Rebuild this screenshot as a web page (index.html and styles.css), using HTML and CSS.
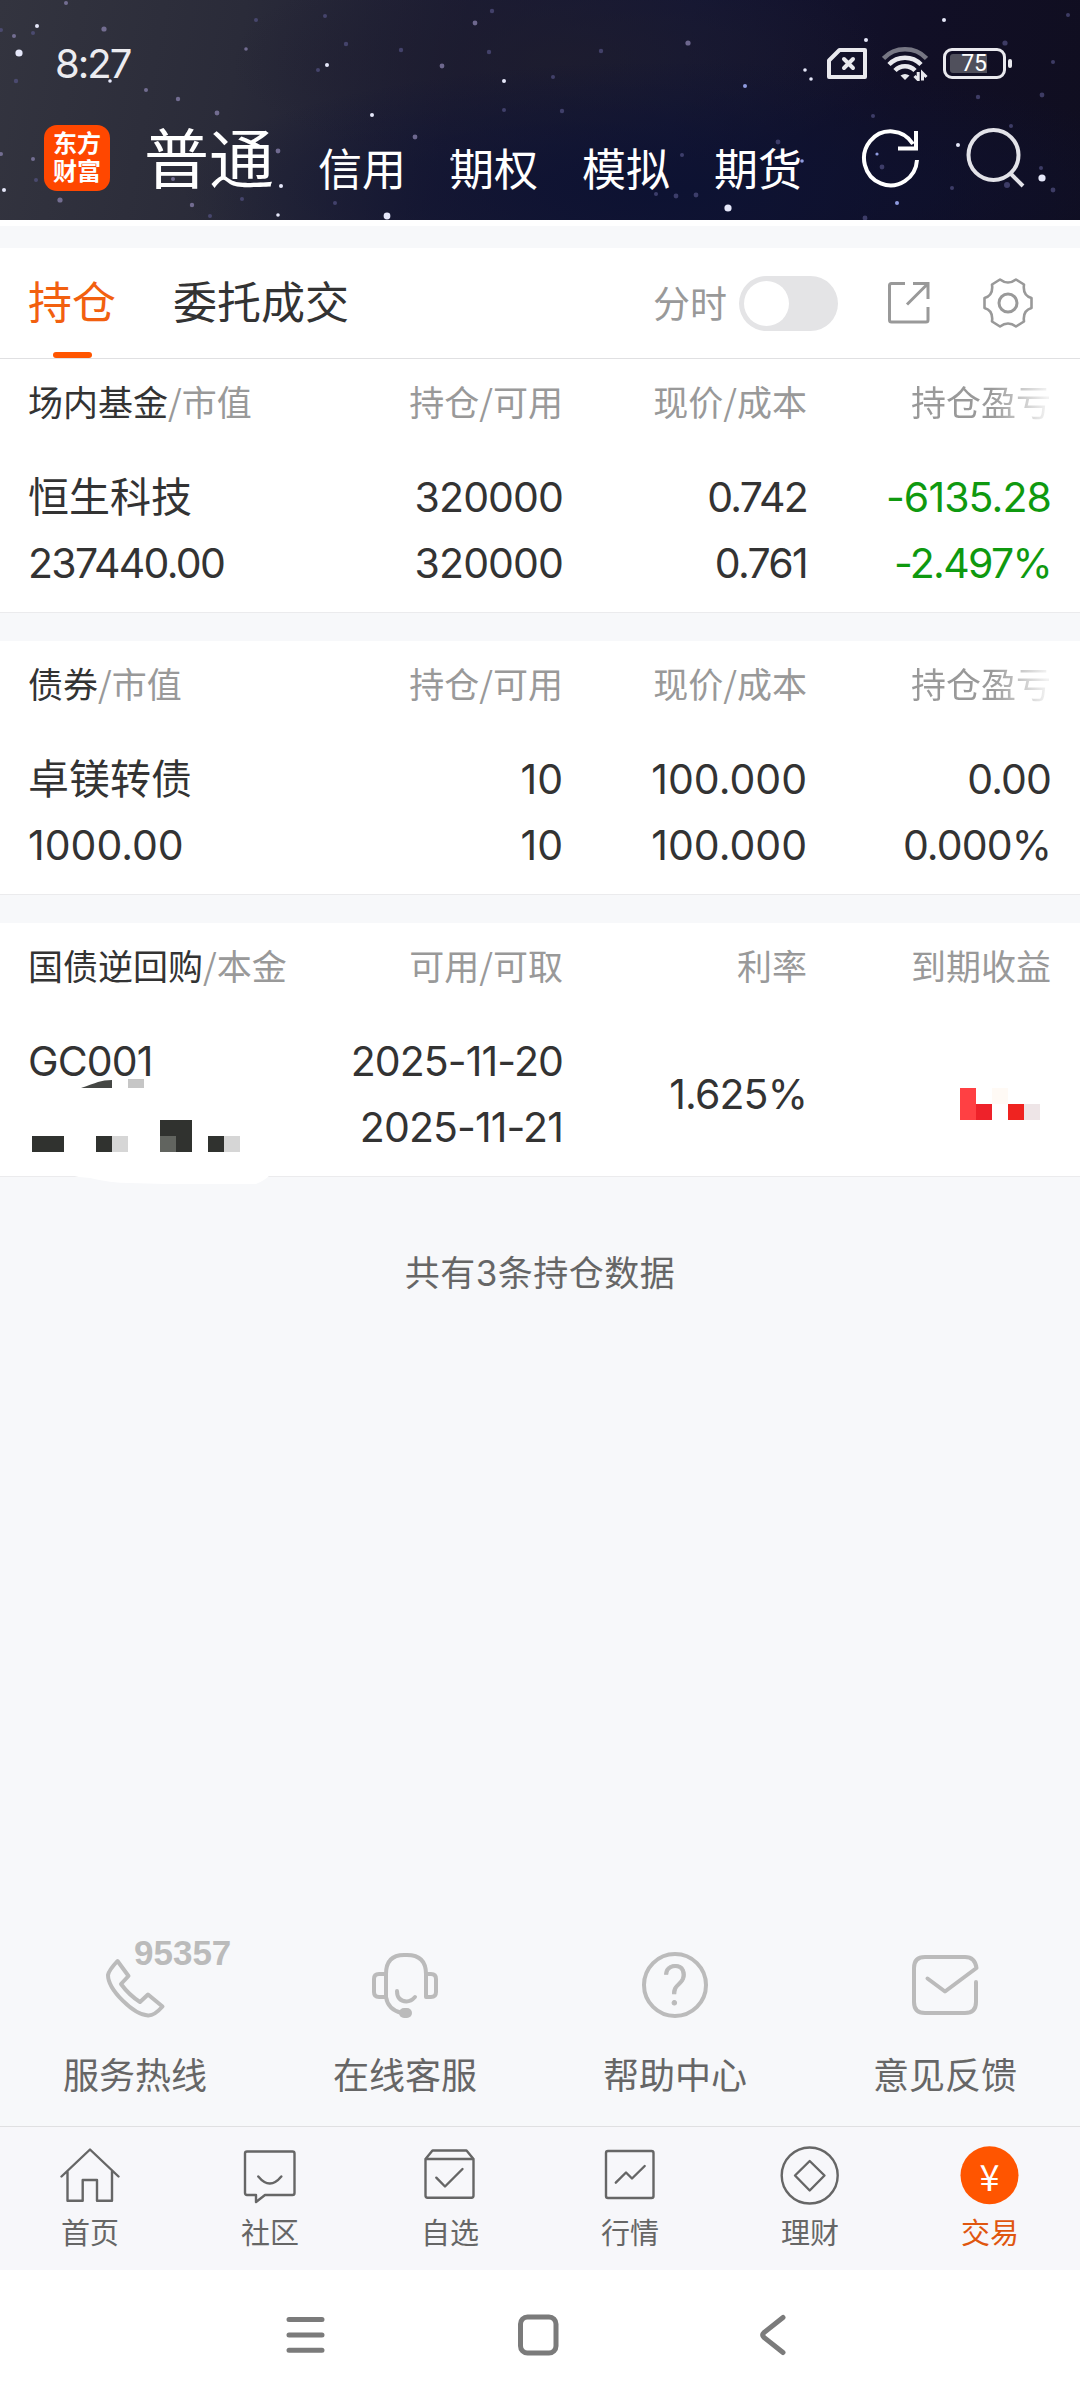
FILE: index.html
```html
<!DOCTYPE html>
<html lang="zh-CN">
<head>
<meta charset="UTF-8">
<meta name="viewport" content="width=device-width, initial-scale=1.0">
<title>持仓</title>
<link rel="stylesheet" href="styles.css">
</head>
<body>
<header class="header">
  <!-- Starry sky -->
  <svg class="sky" viewBox="0 0 1080 220">
    <g fill="#e6e8fa">
      <circle cx="19" cy="53" r="3.6"/><circle cx="37" cy="26" r="2"/><circle cx="110" cy="81" r="1.8"/>
      <circle cx="327" cy="65" r="2"/><circle cx="372" cy="115" r="2"/><circle cx="504" cy="81" r="2"/>
      <circle cx="452" cy="159" r="1.8"/><circle cx="281" cy="186" r="2"/><circle cx="278" cy="215" r="1.8"/>
      <circle cx="387" cy="216" r="3.4"/><circle cx="4" cy="190" r="2"/><circle cx="728" cy="208" r="3.6"/>
      <circle cx="805" cy="70" r="1.8"/><circle cx="811" cy="79" r="1.8"/><circle cx="866" cy="40" r="2"/>
      <circle cx="944" cy="20" r="2"/><circle cx="958" cy="145" r="2"/><circle cx="1042" cy="178" r="3.6"/>
    </g>
    <g fill="#8f9be0">
      <circle cx="897" cy="203" r="2"/><circle cx="802" cy="161" r="1.8"/><circle cx="877" cy="154" r="1.6"/>
      <circle cx="745" cy="86" r="2"/>
    </g>
    <g fill="#8a82ae" opacity="0.75">
      <circle cx="66" cy="3" r="2"/><circle cx="104" cy="29" r="2.6"/><circle cx="14" cy="36" r="2"/>
      <circle cx="178" cy="99" r="2.2"/><circle cx="217" cy="113" r="2.4"/><circle cx="146" cy="90" r="2"/>
      <circle cx="246" cy="49" r="1.8"/><circle cx="442" cy="66" r="2.4"/><circle cx="475" cy="23" r="2.4"/>
      <circle cx="278" cy="151" r="2.4"/><circle cx="60" cy="200" r="2.6"/><circle cx="192" cy="205" r="2.2"/>
      <circle cx="415" cy="137" r="2.4"/><circle cx="688" cy="43" r="2.6"/><circle cx="33" cy="159" r="2"/>
      <circle cx="1" cy="154" r="2"/><circle cx="173" cy="179" r="2"/>
    </g>
    <g fill="#5c5a90" opacity="0.6">
      <circle cx="33" cy="33" r="2"/><circle cx="1" cy="30" r="2"/><circle cx="16" cy="81" r="2.2"/>
      <circle cx="256" cy="20" r="2"/><circle cx="325" cy="16" r="2"/><circle cx="346" cy="44" r="2.2"/>
      <circle cx="401" cy="50" r="2.2"/><circle cx="492" cy="11" r="2.2"/><circle cx="489" cy="52" r="2.2"/>
      <circle cx="36" cy="180" r="2"/><circle cx="242" cy="199" r="2"/><circle cx="335" cy="203" r="2"/>
      <circle cx="210" cy="216" r="2"/><circle cx="318" cy="70" r="2"/><circle cx="601" cy="51" r="2.2"/>
      <circle cx="562" cy="111" r="2.2"/><circle cx="778" cy="142" r="2.4"/><circle cx="696" cy="195" r="2.4"/>
      <circle cx="676" cy="196" r="2.4"/><circle cx="656" cy="194" r="2"/><circle cx="682" cy="155" r="2"/>
      <circle cx="1005" cy="43" r="2.6"/><circle cx="978" cy="97" r="2.2"/><circle cx="1042" cy="95" r="2.4"/>
      <circle cx="873" cy="116" r="2"/><circle cx="1053" cy="62" r="2"/><circle cx="1007" cy="185" r="3"/>
      <circle cx="1053" cy="190" r="2.4"/><circle cx="952" cy="188" r="2"/><circle cx="1068" cy="15" r="2"/>
      <circle cx="865" cy="218" r="2.4"/><circle cx="882" cy="167" r="2.4"/><circle cx="1041" cy="168" r="2"/>
      <circle cx="553" cy="77" r="2"/><circle cx="504" cy="110" r="2"/><circle cx="1011" cy="126" r="2"/>
    </g>
  </svg>

  <div class="status-bar">
    <span class="clock">8:27</span>
    <div class="status-icons">
      <svg width="40" height="31" viewBox="0 0 40 31" fill="none" stroke="#e9e9ee" stroke-width="4" stroke-linejoin="round" stroke-linecap="round">
        <path d="M12.500 2H38V29H2V12.500Z"/>
        <path d="M17 11L26 20M26 11L17 20"/>
      </svg>
      <svg width="46" height="35" viewBox="0 0 46 35" fill="none" stroke="#e9e9ee" stroke-width="4.500">
        <path d="M1.500 12.500Q10 3.300 23 3.300T44.500 12.500" stroke="#777784"/>
        <path d="M7 18.500Q13.500 11.800 23 11.800T39 18.500"/>
        <path d="M13 24.500Q17 20.200 23 20.200T33 24.500"/>
        <path d="M18.500 29.500Q23 26.500 27.500 29.500L23 34Z" fill="#e9e9ee" stroke="none"/>
        <path d="M36.200 26V33.800L32.500 30M40.500 34.500V27L44.500 31" stroke-width="3"/>
      </svg>
      <div class="battery"><span class="battery-level">75</span></div>
    </div>
  </div>

  <div class="account-bar">
    <div class="logo"><span>东方</span><span>财富</span></div>
    <nav class="account-tabs">
      <span class="account-tab active">普通</span>
      <span class="account-tab">信用</span>
      <span class="account-tab">期权</span>
      <span class="account-tab">模拟</span>
      <span class="account-tab">期货</span>
    </nav>
    <div class="header-actions">
      <svg width="60" height="60" viewBox="0 0 60 60" fill="none" stroke="#fff" stroke-width="4">
        <path d="M56 32A26.500 27 0 1 1 52 16"/>
        <path d="M55 3V20.500H37"/>
      </svg>
      <svg width="60" height="60" viewBox="0 0 60 60" fill="none" stroke="#e2e2e8" stroke-width="4">
        <circle cx="27.500" cy="27" r="25"/>
        <path d="M44.500 45.500L57 58"/>
      </svg>
    </div>
  </div>
</header>

<div class="toolbar">
  <span class="tab active">持仓</span>
  <span class="tab">委托成交</span>
  <div class="tools">
    <span class="tools-label">分时</span>
    <span class="switch"></span>
    <svg class="icon-share" width="42" height="42" viewBox="0 0 42 42" fill="none" stroke="#999" stroke-width="3">
      <path d="M17 1.500H3.500Q1.500 1.500 1.500 3.500V38Q1.500 40 3.500 40H38Q40 40 40 38V25"/>
      <path d="M25 1.500H40V17M40 1.500L19 22.500"/>
    </svg>
    <svg class="icon-gear" width="50" height="50" viewBox="0 0 50 50" fill="none" stroke="#999" stroke-width="2.600" stroke-linejoin="round">
      <path d="M17 1.500Q25 7.500 33 1.500L41 6.500Q39.500 17.500 48.500 20V30Q39.500 32.500 41 43.500L33 48.500Q25 42.500 17 48.500L9 43.500Q10.500 32.500 1.500 30V20Q10.500 17.500 9 6.500Z"/>
      <circle cx="25" cy="25" r="9" stroke-width="3"/>
    </svg>
  </div>
</div>

<main class="content">
  <section class="card">
    <div class="row head">
      <span><b>场内基金</b>/市值</span><span>持仓/可用</span><span>现价/成本</span><span class="fade">持仓盈亏</span>
    </div>
    <div class="row">
      <div class="cell"><span class="name">恒生科技</span><span class="tight">237440.00</span></div>
      <div class="cell snug"><span>320000</span><span>320000</span></div>
      <div class="cell tight"><span>0.742</span><span>0.761</span></div>
      <div class="cell down"><span class="snug">-6135.28</span><span class="tight">-2.497%</span></div>
    </div>
  </section>

  <section class="card">
    <div class="row head">
      <span><b>债券</b>/市值</span><span>持仓/可用</span><span>现价/成本</span><span class="fade">持仓盈亏</span>
    </div>
    <div class="row">
      <div class="cell"><span class="name">卓镁转债</span><span>1000.00</span></div>
      <div class="cell"><span>10</span><span>10</span></div>
      <div class="cell"><span>100.000</span><span>100.000</span></div>
      <div class="cell snug"><span>0.00</span><span>0.000%</span></div>
    </div>
  </section>

  <section class="card">
    <div class="row head">
      <span><b>国债逆回购</b>/本金</span><span>可用/可取</span><span>利率</span><span>到期收益</span>
    </div>
    <div class="row">
      <div class="cell snug"><span>GC001</span></div>
      <div class="cell snug"><span>2025-11-20</span><span>2025-11-21</span></div>
      <div class="cell middle snug"><span>1.625%</span></div>
      <div class="cell"></div>
    </div>
    <!-- Masked amounts -->
    <svg class="mask" viewBox="0 0 1080 264">
      <path d="M70 252Q80 255 90 255Q110 260 130 260L165 261H256Q264 258 270 252Z" fill="#fff"/>
      <path d="M81 165Q92 161 98 159Q104 157 112 157V165Z" fill="#454744"/>
      <path d="M128 156h16v9h-16z" fill="#c6c6c6"/>
      <path d="M32 213h32v16h-32zM96 213h16v16h-16zM160 197h32v32h-32zM208 213h16v16h-16z" fill="#30322f"/>
      <path d="M112 213h16v16h-16zM224 213h16v16h-16z" fill="#d6d6d6"/>
      <path d="M160 213h16v16h-16z" fill="#61645f"/>
      <path d="M960 165h16v32h-16z" fill="#ff4043"/>
      <path d="M976 181h16v16h-16z" fill="#ee222a"/>
      <path d="M992 165h16v16h-16z" fill="#fffaf5"/>
      <path d="M1008 181h16v16h-16z" fill="#ef2320"/>
      <path d="M1024 181h16v16h-16z" fill="#eee5e7"/>
    </svg>
  </section>

  <p class="summary">共有3条持仓数据</p>

  <div class="services">
    <div class="service">
      <div class="service-icon">
        <svg viewBox="0 0 72 72"><path d="M18.500 11L29.500 26L22 34Q30 45 41 52L49 44.500L63.500 56.500Q55 66 49 65.500C35 65 9 40 9 25Q10 20 18.500 11Z"/></svg>
        <span class="hotline">95357</span>
      </div>
      <span>服务热线</span>
    </div>
    <div class="service">
      <div class="service-icon">
        <svg viewBox="0 0 72 72">
          <path d="M17 47H10Q5 47 5 42V29Q5 24 10 24H17"/>
          <path d="M33 63Q19 60 17 47V24Q17 5 35 5H38Q57 5 57 24V47H62Q67 47 67 42V29Q67 24 62 24H57"/>
          <path d="M28 41Q28 51 37.500 51.500Q42 51.500 46 47"/>
          <rect x="30" y="58" width="13" height="10" rx="5" fill="#bbb" stroke="none"/>
        </svg>
      </div>
      <span>在线客服</span>
    </div>
    <div class="service">
      <div class="service-icon">
        <svg viewBox="0 0 72 72">
          <circle cx="36" cy="35" r="31"/>
          <text class="question" x="36" y="55">?</text>
        </svg>
      </div>
      <span>帮助中心</span>
    </div>
    <div class="service">
      <div class="service-icon">
        <svg viewBox="0 0 72 72"><path d="M67 32V52Q67 63 56 63H16Q5 63 5 52V18Q5 7 16 7H56Q66 7 67.500 18L36 41.500L18.500 28.500"/></svg>
      </div>
      <span>意见反馈</span>
    </div>
  </div>
</main>

<nav class="tab-bar">
  <div class="tab-item">
    <svg viewBox="0 0 60 60"><path d="M1.500 31.500L30 4.500L58.500 31.500M7.500 26.500V55.700H22.700V35H37V55.700H52V26.500"/></svg>
    <span>首页</span>
  </div>
  <div class="tab-item">
    <svg viewBox="0 0 60 60"><path d="M7 6.500H52.500Q54.500 6.500 54.500 8.500V48Q54.500 50 52.500 50H25L16 57V50H7Q5 50 5 48V8.500Q5 6.500 7 6.500ZM18.300 31.500Q29.800 45.500 41.300 31.500"/></svg>
    <span>社区</span>
  </div>
  <div class="tab-item">
    <svg viewBox="0 0 60 60"><path d="M5.500 14L12.500 5.500H46.500L53.500 14V50.500Q53.500 52.700 51.500 52.700H7.500Q5.500 52.700 5.500 50.500ZM5.500 14H53.500M16.300 32.700L25 41.500L42.500 24"/></svg>
    <span>自选</span>
  </div>
  <div class="tab-item">
    <svg viewBox="0 0 60 60"><rect x="6" y="6" width="47.500" height="47" rx="2"/><path d="M15.800 37.700L26 27.500L32 33.500L44.700 21"/></svg>
    <span>行情</span>
  </div>
  <div class="tab-item">
    <svg viewBox="0 0 60 60"><circle cx="29.700" cy="30.500" r="28"/><path d="M29.700 16L44.500 30.500L29.700 45.500L15 30.500Z"/></svg>
    <span>理财</span>
  </div>
  <div class="tab-item active">
    <svg viewBox="0 0 60 60"><circle class="coin" cx="29.500" cy="30.300" r="29"/><text class="yuan" x="29.500" y="45.500">¥</text></svg>
    <span>交易</span>
  </div>
</nav>

<div class="system-nav">
  <svg width="40" height="42" viewBox="0 0 40 42"><path d="M3 5.500H36M3 21H36M3 36.300H36"/></svg>
  <svg width="42" height="42" viewBox="0 0 42 42"><rect x="3.500" y="3" width="35.500" height="36" rx="7"/></svg>
  <svg width="42" height="42" viewBox="0 0 42 42"><path d="M33 3.500L14 18.500Q11.500 21 14 23.500L33 38.500"/></svg>
</div>
</body>
</html>
```

FILE: styles.css
```css
:root {
  --orange: #ff5500;
  --text-color: #333;
  --muted: #999;
  --page-bg: #f7f8fa;
  --line: #e0e0e2;
}

* {
  box-sizing: border-box;
}

body {
  margin: 0;
  width: 1080px;
  height: 2400px;
  display: flex;
  flex-direction: column;
  font-family: Inter, "Noto Sans CJK SC", sans-serif;
  color: var(--text-color);
  background: var(--page-bg);
  overflow: hidden;
}

svg {
  display: block;
  flex-shrink: 0;
}

/* Header */
.header {
  position: relative;
  height: 226px;
  flex-shrink: 0;
  border-bottom: 6px solid #fff;
  background:
    radial-gradient(ellipse 500px 130px at 680px 190px, #0d1232 0%, rgba(13, 18, 50, 0) 100%),
    radial-gradient(ellipse 330px 110px at 560px 60px, rgba(30, 29, 46, 0.8) 0%, rgba(30, 29, 46, 0) 100%),
    linear-gradient(100deg, #33343f 0%, #2a2b39 22%, #1b1b33 42%, #141634 62%, #110f26 82%, #100e20 100%);
}

.sky {
  position: absolute;
  top: 0;
  left: 0;
  width: 1080px;
  height: 220px;
}

.status-bar {
  position: relative;
  height: 124px;
  padding: 2px 74px 0 55px;
  display: flex;
  justify-content: space-between;
  align-items: center;
}

.clock {
  font-size: 40px;
  letter-spacing: -2px;
  color: #ececf0;
}

.status-icons {
  display: flex;
  align-items: center;
  gap: 15px;
}

.battery {
  position: relative;
  width: 63px;
  height: 31px;
  padding: 3px 4px;
  border: 3px solid #e9e9ee;
  border-radius: 9px;
}

.battery::after {
  content: "";
  position: absolute;
  right: -9px;
  top: 8px;
  width: 4px;
  height: 9px;
  border-radius: 2px;
  background: #e9e9ee;
}

.battery-level {
  display: block;
  width: 37px;
  height: 19px;
  border-radius: 3px 0 0 3px;
  background: #50505c;
  color: #fff;
  font: 23px/19px Roboto, sans-serif;
  text-align: right;
}

.account-bar {
  position: relative;
  height: 68px;
  display: flex;
  align-items: center;
  padding: 0 54px 0 44px;
}

.logo {
  width: 66px;
  height: 66px;
  display: flex;
  flex-direction: column;
  align-items: center;
  justify-content: center;
  border-radius: 13px;
  background: #ff4700;
  color: #fff;
  font-size: 24px;
  font-weight: bold;
  line-height: 28px;
}

.account-tabs {
  display: flex;
  align-items: baseline;
  gap: 44px;
  margin-left: 34px;
  padding-top: 9px;
  color: #fff;
  white-space: nowrap;
}

.account-tab {
  padding-top: 2px;
  font-size: 44px;
  line-height: 68px;
}

.account-tab.active {
  font-size: 65px;
}

/* The small tabs sit on the bottom edge of the big one */
.account-tab:not(.active) {
  transform: translateY(3px);
}

.header-actions {
  display: flex;
  gap: 45px;
  margin-left: auto;
}

/* Tabs and tools */
.toolbar {
  height: 111px;
  flex-shrink: 0;
  margin-top: 22px;
  padding: 0 47px 0 28px;
  display: flex;
  background: #fff;
  border-bottom: 1px solid var(--line);
}

.tab {
  position: relative;
  margin-right: 57px;
  font-size: 44px;
  line-height: 110px;
}

.tab.active {
  color: #f2600f;
}

.tab.active::after {
  content: "";
  position: absolute;
  left: 25px;
  bottom: 0;
  width: 39px;
  height: 6px;
  border-radius: 3px;
  background: var(--orange);
}

.tools {
  display: flex;
  align-items: center;
  margin-left: auto;
}

.tools-label {
  margin-top: -2px;
  font-size: 37px;
  color: var(--muted);
}

.switch {
  width: 99px;
  height: 55px;
  padding: 5px;
  margin-left: 12px;
  border-radius: 28px;
  background: #e4e4e6;
}

.switch::before {
  content: "";
  display: block;
  width: 45px;
  height: 45px;
  border-radius: 50%;
  background: #fff;
}

.icon-share {
  margin-left: 50px;
}

.icon-gear {
  margin-left: 53px;
}

/* Holdings */
.content {
  flex: 1;
  display: flex;
  flex-direction: column;
}

.card {
  position: relative;
  height: 254px;
  margin-bottom: 28px;
  padding: 0 29px 0 28px;
  background: #fff;
  border-bottom: 1px solid #ebebed;
}

.row {
  display: grid;
  grid-template-columns: 1fr 245px 244px 244px;
  white-space: nowrap;
}

.row > :not(:first-child) {
  text-align: right;
}

.head {
  margin-bottom: 21px;
  font-family: "Noto Sans CJK SC", sans-serif;
  font-size: 35px;
  line-height: 84px;
  color: var(--muted);
}

.head b {
  font-weight: normal;
  color: var(--text-color);
}

.fade {
  background: linear-gradient(90deg, #999 0 185px, #f2f2f2 240px);
  background-clip: text;
  -webkit-background-clip: text;
  color: transparent;
}

.cell {
  display: flex;
  flex-direction: column;
  font-size: 41px;
  line-height: 66px;
}

.cell.middle {
  justify-content: center;
}

.snug {
  letter-spacing: -0.9px;
}

.tight {
  letter-spacing: -1.7px;
}

.down {
  color: #0f990f;
}

.mask {
  position: absolute;
  left: 0;
  top: 0;
  width: 1080px;
  height: 264px;
}

.summary {
  margin: 41px 0 0;
  font-size: 35px;
  line-height: 54px;
  letter-spacing: 0.5px;
  text-align: center;
  color: #666;
}

.services {
  display: grid;
  grid-template-columns: repeat(4, 1fr);
  margin-top: auto;
  height: 176px;
}

.service {
  display: flex;
  flex-direction: column;
  align-items: center;
  font-size: 36px;
  line-height: 52px;
  color: #666;
}

.service-icon {
  position: relative;
  width: 72px;
  height: 72px;
  margin-bottom: 28px;
}

.service-icon svg {
  fill: none;
  stroke: #bbb;
  stroke-width: 4;
  stroke-linecap: round;
  stroke-linejoin: round;
}

.hotline {
  position: absolute;
  left: 35px;
  top: -17px;
  font: bold 35px/40px "Liberation Sans", sans-serif;
  color: #bbb;
}

.question {
  font: 300 56px Roboto, sans-serif;
  text-anchor: middle;
  fill: #bbb;
  stroke-width: 1;
}

/* Bottom tabs */
.tab-bar {
  height: 144px;
  flex-shrink: 0;
  display: grid;
  grid-template-columns: repeat(6, 1fr);
  padding-top: 18px;
  border-top: 1px solid var(--line);
  background: #f7f7fa;
}

.tab-item {
  display: flex;
  flex-direction: column;
  align-items: center;
  font-size: 29px;
  line-height: 40px;
  color: #666;
}

.tab-item svg {
  width: 60px;
  height: 60px;
  margin-bottom: 9px;
  fill: none;
  stroke: #666;
  stroke-width: 2.4;
  stroke-linejoin: round;
  stroke-linecap: round;
}

.tab-item.active {
  color: #e0560f;
}

.tab-item .coin {
  fill: var(--orange);
  stroke: none;
}

.tab-item .yuan {
  font: 36px "Noto Sans CJK SC", sans-serif;
  text-anchor: middle;
  fill: #fff;
  stroke: none;
}

/* System navigation */
.system-nav {
  height: 130px;
  flex-shrink: 0;
  display: flex;
  justify-content: space-between;
  align-items: center;
  padding: 0 288px 0 286px;
  background: #fff;
}

.system-nav svg {
  fill: none;
  stroke: #7b7b7b;
  stroke-width: 5;
  stroke-linecap: round;
}
```
